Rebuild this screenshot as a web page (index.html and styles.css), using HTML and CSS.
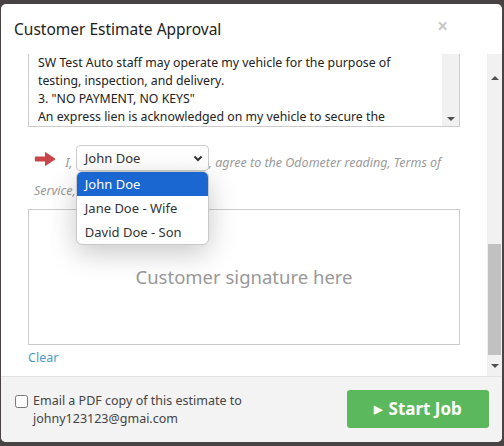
FILE: index.html
```html
<!DOCTYPE html>
<html lang="en">
<head>
  <meta charset="UTF-8">
  <title>Customer Estimate Approval</title>
  <link rel="stylesheet" href="styles.css">
</head>
<body>
  <div class="modal">
    <div class="modal-header">
      <h4>Customer Estimate Approval</h4>
      <span class="close">&times;</span>
    </div>

    <div class="modal-scroll">
      <div class="modal-body">
        <div class="terms">
          <div class="terms-text">
            2. AUTHORIZATION TO OPERATE VEHICLE<br>
            SW Test Auto staff may operate my vehicle for the purpose of<br>
            testing, inspection, and delivery.<br>
            3. "NO PAYMENT, NO KEYS"<br>
            An express lien is acknowledged on my vehicle to secure the<br>
            amount of repairs thereto.
          </div>
          <div class="terms-bar"><span class="tri-down"></span></div>
        </div>

        <div class="agree">
          <svg class="pointer" width="22" height="16" viewBox="0 0 22 16">
            <path d="M2 5.5 H11 V1.8 Q11 0.6 12.1 1.4 L20.8 7.2 Q21.8 8 20.8 8.8 L12.1 14.6 Q11 15.4 11 14.2 V10.5 H2 Q0.8 10.5 0.8 9.3 V6.7 Q0.8 5.5 2 5.5 Z" fill="#c9474a"/>
          </svg>
          <em>I,</em>
          <span class="select">
            <span>John Doe</span>
            <svg class="chevron" width="10" height="7" viewBox="0 0 10 7">
              <path d="M1.5 1.5 L5 5 L8.5 1.5" fill="none" stroke="#333" stroke-width="2"/>
            </svg>
            <span class="options">
              <span class="option active">John Doe</span>
              <span class="option">Jane Doe - Wife</span>
              <span class="option">David Doe - Son</span>
            </span>
          </span><em>, agree to the Odometer reading, Terms of Service, and Warranty.</em>
        </div>

        <div class="signature">Customer signature here</div>
        <a href="#" class="clear">Clear</a>
      </div>

      <div class="scrollbar">
        <div class="sb-btn sb-up"><span class="tri-up"></span></div>
        <div class="sb-track"><div class="sb-thumb"></div></div>
        <div class="sb-btn sb-down"><span class="tri-down"></span></div>
      </div>
    </div>

    <div class="modal-footer">
      <label class="email">
        <input type="checkbox">
        <span>Email a PDF copy of this estimate to<br>johny123123@gmai.com</span>
      </label>
      <button class="start"><span class="play">&#9654;</span> Start Job</button>
    </div>
  </div>
</body>
</html>
```

FILE: styles.css
```css
html, body {
  margin: 0;
  padding: 0;
}
body {
  background-color: #4a4343;
  padding: 4px 2px 4px 1px;
  font-family: "Noto Sans", "Liberation Sans", sans-serif;
  color: #333;
  height: 446px;
  box-sizing: border-box;
  overflow: hidden;
}
.modal {
  background: #fff;
  border-radius: 5px;
  height: 438px;
  display: flex;
  flex-direction: column;
  overflow: hidden;
}
.modal-header {
  height: 50px;
  flex: none;
  display: flex;
  align-items: center;
  justify-content: space-between;
  padding: 0 54px 0 13px;
}
.modal-header h4 {
  margin: 0;
  font-size: 15.5px;
  font-weight: normal;
  color: #222;
}
.close {
  color: #c8c8c8;
  font-size: 19px;
  font-weight: bold;
  margin-top: -6px;
}
.modal-scroll {
  flex: 1;
  display: flex;
  overflow: hidden;
}
.modal-body {
  flex: 1;
  padding: 0 27px 0 27px;
  overflow: hidden;
  position: relative;
}
.terms {
  margin-top: -19px;
  height: 90px;
  border: 1px solid #ccc;
  display: flex;
  overflow: hidden;
}
.terms-text {
  flex: 1;
  padding: 0 9px;
  font-size: 12.3px;
  line-height: 18px;
  color: #222;
  white-space: nowrap;
}
.terms-bar {
  width: 17px;
  background: #f1f1f1;
  display: flex;
  align-items: flex-end;
  justify-content: center;
  padding-bottom: 5px;
  box-sizing: border-box;
}
.tri-down, .tri-up {
  width: 0;
  height: 0;
  border-left: 4px solid transparent;
  border-right: 4px solid transparent;
}
.tri-down {
  border-top: 4px solid #505050;
}
.tri-up {
  border-bottom: 4px solid #505050;
}
.agree {
  margin: 18px 0 4px;
  padding-left: 6px;
  line-height: 28px;
  height: 60px;
  font-size: 12.5px;
  color: #999;
}
.agree em {
  color: #9a9a9a;
}
.pointer {
  vertical-align: 0;
  margin-right: 6px;
}
.select {
  display: inline-flex;
  align-items: center;
  justify-content: space-between;
  position: relative;
  width: 133px;
  height: 26px;
  box-sizing: border-box;
  border: 1px solid #ccc;
  border-radius: 4px;
  padding: 0 5px 0 8px;
  font-size: 13px;
  font-style: normal;
  color: #333;
  vertical-align: 4px;
  line-height: 24px;
}
.options {
  position: absolute;
  top: 25px;
  left: -1px;
  width: 133px;
  display: flex;
  flex-direction: column;
  background: #fff;
  border: 1px solid #c8c8c8;
  border-radius: 6px;
  box-sizing: border-box;
  box-shadow: 0 8px 28px rgba(0, 0, 0, 0.22);
  overflow: hidden;
  z-index: 10;
}
.option {
  height: 24px;
  line-height: 24px;
  padding-left: 8px;
  font-size: 13px;
  color: #333;
}
.option.active {
  background: #1a67d2;
  color: #fff;
}
.signature {
  height: 136px;
  border: 1px solid #ccc;
  box-sizing: border-box;
  display: flex;
  align-items: center;
  justify-content: center;
  padding-bottom: 2px;
  font-size: 18.5px;
  color: #999;
}
.clear {
  display: inline-block;
  margin-top: 4px;
  font-size: 12.5px;
  color: #4a9cc2;
  text-decoration: none;
}
.scrollbar {
  width: 15px;
  flex: none;
  background: #f1f1f1;
  display: flex;
  flex-direction: column;
}
.sb-btn {
  display: flex;
  justify-content: center;
}
.sb-up {
  height: 26px;
  align-items: flex-end;
  padding-bottom: 0;
}
.sb-track {
  flex: 1;
}
.sb-thumb {
  margin: 164px 1px 0 1px;
  height: 111px;
  background: #c1c1c1;
}
.sb-down {
  height: 20px;
  align-items: center;
}
.modal-footer {
  height: 66px;
  flex: none;
  box-sizing: border-box;
  border-top: 1px solid #e3e3e3;
  background: #f3f3f3;
  display: flex;
  align-items: center;
  justify-content: space-between;
  padding: 0 13px 0 14px;
}
.email {
  display: flex;
  align-items: flex-start;
  gap: 5px;
  font-size: 12.5px;
  line-height: 18px;
  color: #444;
}
.email input {
  margin: 3px 0 0;
  width: 13px;
  height: 13px;
}
.start {
  width: 142px;
  height: 38px;
  background: #5cb85c;
  border: none;
  border-radius: 3px;
  color: #fff;
  font-family: "Noto Sans", "Liberation Sans", sans-serif;
  font-size: 17px;
  font-weight: bold;
  margin-top: -2px;
}
.play {
  font-size: 11px;
  margin-right: 2px;
  vertical-align: 2px;
}
```
